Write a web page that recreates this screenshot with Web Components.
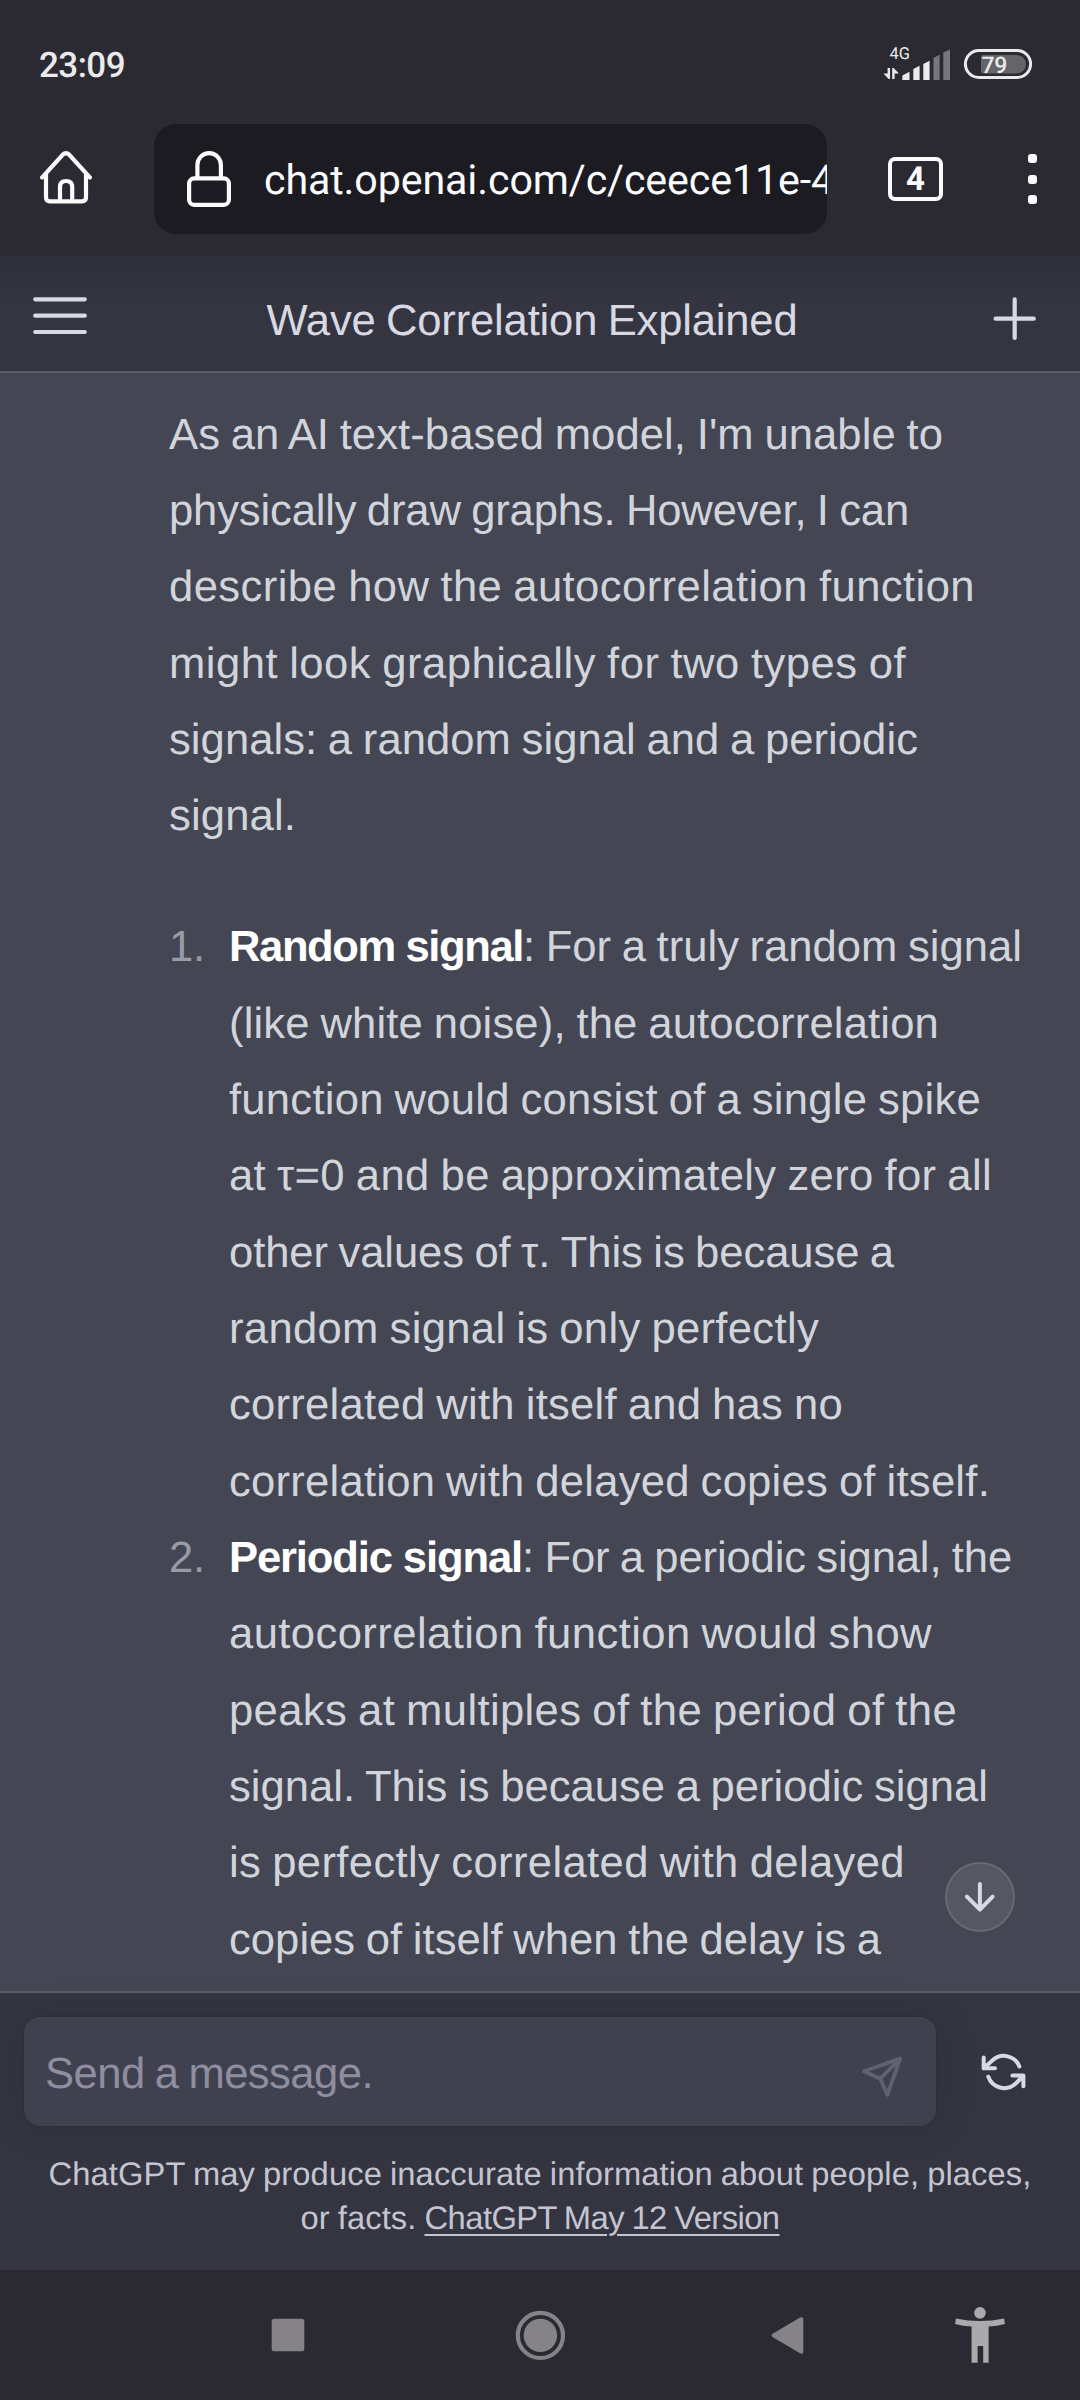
<!DOCTYPE html>
<html lang="en">
<head>
<meta charset="utf-8">
<title>Wave Correlation Explained</title>
<style>
html, body { margin: 0; padding: 0; background: #343541; }
body { width: 1080px; height: 2400px; overflow: hidden; font-family: "Liberation Sans", Arial, sans-serif; text-rendering: geometricPrecision; }
</style>
</head>
<body>
<phone-screen>
  <status-bar slot="top" time="23:09" battery="79" network="4G"></status-bar>
  <browser-bar slot="top" tabs="4">chat.openai.com/c/ceece11e-4</browser-bar>
  <chat-header slot="top">Wave Correlation Explained</chat-header>
  <chat-message>
    <text-block>
      <fit-line w="774">As an AI text-based model, I'm unable to</fit-line>
      <fit-line w="740">physically draw graphs. However, I can</fit-line>
      <fit-line w="806">describe how the autocorrelation function</fit-line>
      <fit-line w="737">might look graphically for two types of</fit-line>
      <fit-line w="749">signals: a random signal and a periodic</fit-line>
      <fit-line w="127">signal.</fit-line>
    </text-block>
    <list-item number="1.">
      <fit-line><fit-line class="b" w="294">Random signal</fit-line><fit-line w="499">: For a truly random signal</fit-line></fit-line>
      <fit-line w="710">(like white noise), the autocorrelation</fit-line>
      <fit-line w="752">function would consist of a single spike</fit-line>
      <fit-line w="763">at τ=0 and be approximately zero for all</fit-line>
      <fit-line w="665">other values of τ. This is because a</fit-line>
      <fit-line w="590">random signal is only perfectly</fit-line>
      <fit-line w="614">correlated with itself and has no</fit-line>
      <fit-line w="761">correlation with delayed copies of itself.</fit-line>
    </list-item>
    <list-item number="2.">
      <fit-line><fit-line class="b" w="293">Periodic signal</fit-line><fit-line w="490">: For a periodic signal, the</fit-line></fit-line>
      <fit-line w="703">autocorrelation function would show</fit-line>
      <fit-line w="728">peaks at multiples of the period of the</fit-line>
      <fit-line w="759">signal. This is because a periodic signal</fit-line>
      <fit-line w="676">is perfectly correlated with delayed</fit-line>
      <fit-line w="652">copies of itself when the delay is a</fit-line>
    </list-item>
  </chat-message>
  <chat-composer slot="bottom" placeholder="Send a message."></chat-composer>
  <nav-bar slot="bottom"></nav-bar>
</phone-screen>

<script>
const fitQueue = [];

function define(name, html, after) {
  const template = document.createElement('template');
  template.innerHTML = html;
  customElements.define(name, class extends HTMLElement {
    connectedCallback() {
      if (this.shadowRoot) return;
      this.attachShadow({ mode: 'open' }).append(template.content.cloneNode(true));
      this.shadowRoot.querySelectorAll('[data-attr]').forEach(el => {
        el.textContent = this.getAttribute(el.dataset.attr);
      });
      if (after) after(this);
    }
  });
}

define('phone-screen', `
<style>
:host { display: flex; flex-direction: column; width: 1080px; height: 2400px; overflow: hidden; background: #444654; }
main { flex: 1; min-height: 0; overflow: hidden; }
</style>
<slot name="top"></slot><main><slot></slot></main><slot name="bottom"></slot>`);

define('status-bar', `
<style>
:host { display: flex; box-sizing: border-box; height: 124px; padding: 0 48px 0 39px; background: #2b2a33; font-family: Roboto, sans-serif; color: #eaeaea; }
.time { flex: 1; font-size: 35px; font-weight: 500; line-height: 41px; margin-top: 45px; }
svg { display: block; margin-top: 40px; }
text { font-family: Roboto, sans-serif; fill: #eaeaea; }
</style>
<div class="time"><fit-line w="86"><span data-attr="time"></span></fit-line></div>
<svg width="152" height="50" viewBox="880 40 152 50" fill="#eaeaea">
  <text x="889.6" y="59.4" font-size="16.5" textLength="20.4" lengthAdjust="spacingAndGlyphs" data-attr="network"></text>
  <path d="M887.6 68H890V79H888.6L883.5 73.6H887.6ZM892.2 79V68H893.6L899 73.4H894.6V79Z"/>
  <path d="M902.3 80V75.6L909.5 71.8V80ZM913.3 80V69L919.6 65.8V80ZM923.3 80V64L929.6 60.8V80Z"/>
  <path fill="#77767c" d="M933.5 80V58L939.6 54.8V80ZM943.3 80V52.6L950 49.6V80Z"/>
  <rect x="965.4" y="50.5" width="65.2" height="27" rx="13.5" fill="none" stroke="#eaeaea" stroke-width="3"/>
  <path fill="#656469" d="M983 55H1016.8A9.2 9.2 0 0 1 1016.8 73.4H983A2 2 0 0 1 981 71.4V57A2 2 0 0 1 983 55Z"/>
  <text x="981.4" y="73" font-size="23" font-weight="500" textLength="26" data-attr="battery"></text>
</svg>`);

define('browser-bar', `
<style>
:host { display: flex; align-items: flex-start; box-sizing: border-box; height: 132px; padding: 0 43px 0 40px; background: #2b2a33; font-family: Roboto, sans-serif; color: #fbfbfe; }
svg { display: block; fill: none; stroke: #fbfbfe; stroke-width: 4.2; flex: none; }
.home { margin-top: 26px; }
.url { display: flex; box-sizing: border-box; width: 673px; height: 110px; margin-left: 62px; padding-left: 33px; border-radius: 22px; background: #1c1b22; overflow: hidden; }
.url svg { margin-top: 26px; }
.url div { margin: 33px 0 0 33px; font-size: 41.2px; line-height: 48px; }
.tab { box-sizing: border-box; width: 55px; height: 44px; margin: 33px 0 0 61px; border: 4px solid #fbfbfe; border-radius: 7px; font-size: 33px; font-weight: 700; line-height: 37px; text-align: center; }
.dots { display: flex; flex-direction: column; gap: 11.6px; margin: 30px 0 0 auto; }
.dots i { width: 9px; height: 9px; border-radius: 3px; background: #fbfbfe; }
</style>
<svg class="home" width="52" height="56" viewBox="40 150 52 56" stroke-linecap="round" stroke-linejoin="round">
  <path d="M42.2 177.4L62.6 154.8Q66 151.6 69.4 154.8L89.8 177.4M46 174V197.3Q46 201.3 50 201.3H82Q86 201.3 86 197.3V174M60 201V187Q60 181 66.1 181Q72.2 181 72.2 187V201"/>
</svg>
<div class="url">
  <svg width="44" height="58" viewBox="187 150 44 58">
    <rect x="189.1" y="178.4" width="39.8" height="26.4" rx="5"/>
    <path d="M197.4 178V165A11.7 11.8 0 0 1 220.9 165V178"/>
  </svg>
  <div><fit-line w="570"><slot></slot></fit-line></div>
</div>
<div class="tab" data-attr="tabs"></div>
<div class="dots"><i></i><i></i><i></i></div>`);

define('chat-header', `
<style>
:host { display: flex; box-sizing: border-box; height: 117px; padding: 0 42px 0 33px; border-bottom: 2px solid #5c5d69; background: linear-gradient(#2f2f3a, #343541 44px); color: #d9d9e3; font-size: 43.6px; line-height: 54px; }
svg { display: block; fill: none; stroke: #d9d9e3; stroke-width: 4.2; stroke-linecap: round; flex: none; }
.menu { margin-top: 40px; }
.title { margin: 38px auto 0 179.5px; }
.plus { margin-top: 39px; }
</style>
<svg class="menu" width="54" height="40" viewBox="33 296 54 40"><path d="M35.2 299.3H84.8M35.2 315.7H84.8M35.2 332H84.8"/></svg>
<div class="title"><fit-line w="531"><slot></slot></fit-line></div>
<svg class="plus" width="46" height="46" viewBox="992 295 46 46"><path d="M995.6 318.7H1033.8M1014.7 299.4V338"/></svg>`);

define('chat-message', `
<style>
:host { display: block; padding: 23.5px 0 0 169px; color: #d1d5db; font-size: 43.6px; line-height: 76.36px; }
</style><slot></slot>`);

define('text-block', `
<style>:host { display: flex; flex-direction: column; margin-bottom: 54.5px; }</style><slot></slot>`);

define('list-item', `
<style>
:host { display: flex; }
.num { width: 60px; flex: none; color: #989ca9; }
.body { display: flex; flex-direction: column; }
</style>
<div class="num"><fit-line w="36"><span data-attr="number"></span></fit-line></div><div class="body"><slot></slot></div>`);

define('chat-composer', `
<style>
:host { display: flex; flex-direction: column; box-sizing: border-box; height: 279px; position: relative; border-top: 2px solid #5c5d69; background: #343541; font-family: "Liberation Sans", Arial, sans-serif; }
.row { display: flex; padding: 24px 0 0 24px; }
.box { display: flex; justify-content: space-between; box-sizing: border-box; width: 912px; height: 109px; padding: 0 32px 0 21px; border-radius: 16px; background: #40414f; box-shadow: 0 0 40px rgba(0,0,0,.1), 0 0 3px rgba(0,0,0,.18); color: #8e8ea0; font-size: 43.6px; line-height: 54px; }
.box div { margin-top: 29.5px; }
svg { display: block; fill: none; stroke-linecap: round; stroke-linejoin: round; }
.send { margin-top: 38px; stroke: #5f6070; stroke-width: 3.8; }
.again { margin: 34px 0 0 44px; stroke: #d9d9e3; stroke-width: 4; }
.note { display: flex; flex-direction: column; align-items: center; margin-top: 26.3px; color: #c5c5d2; font-size: 32.7px; line-height: 43.6px; }
.note div { display: flex; }
.link { text-decoration: underline; text-decoration-thickness: 2px; text-underline-offset: 5px; }
.jump { position: absolute; right: 65px; top: -131px; box-sizing: border-box; width: 70px; height: 70px; border: 2px solid #686974; border-radius: 50%; background: #565762; }
.jump svg { stroke: #d9d9e3; stroke-width: 4; }
</style>
<div class="row">
  <div class="box">
    <div><fit-line w="328"><span data-attr="placeholder"></span></fit-line></div>
    <svg class="send" width="44" height="44" viewBox="860 2055 44 44"><path d="M900.2 2058.6L863.9 2071.3L880.3 2078.7L887.3 2094.8ZM880.3 2078.7L900.2 2058.6"/></svg>
  </div>
  <svg class="again" width="46" height="42" viewBox="980 2051 46 42"><path d="M1019.4 2066.4A16.8 16.8 0 0 0 992.6 2060.2L983.7 2068.3M983.7 2057.5V2068.3H995M988.3 2076.7A16.8 16.8 0 0 0 1015.4 2083.8L1023.2 2076M1012.4 2075.6H1023.4V2086.2"/></svg>
</div>
<div class="note">
  <fit-line w="983">ChatGPT may produce inaccurate information about people, places,</fit-line>
  <div><fit-line w="124">or facts.&nbsp;</fit-line><fit-line class="link" w="355">ChatGPT May 12 Version</fit-line></div>
</div>
<div class="jump"><svg width="66" height="66" viewBox="947 1864 66 66"><path d="M979.9 1884V1909.4M966.9 1896.6L979.9 1909.6L992.6 1896.6"/></svg></div>`);

define('nav-bar', `
<style>
:host { display: flex; align-items: flex-start; box-sizing: border-box; position: relative; height: 130px; padding: 37px 75px 0 271px; background: #2b2a33; justify-content: space-between; }
svg { display: block; fill: #858388; }
</style>
<svg width="34" height="60" viewBox="271 2307 34 60"><rect x="271.7" y="2318.8" width="32.6" height="32.4" rx="2.5"/></svg>
<svg width="52" height="60" viewBox="514 2307 52 60" style="margin-left:209px"><circle cx="540.4" cy="2335.4" r="22.6" fill="none" stroke="#858388" stroke-width="4.2"/><circle cx="540.4" cy="2335.4" r="16.7"/></svg>
<svg width="34" height="60" viewBox="770 2307 34 60" style="margin-left:204px"><path d="M773 2333.5L800 2317.6Q803.3 2316.2 803.3 2319.6V2351.6Q803.3 2355 800 2353.2L773 2337.3Q770 2335.4 773 2333.5Z"/></svg>
<svg width="50" height="60" viewBox="955 2307 50 60" style="margin-left:151px;fill:#aaaaac"><circle cx="980" cy="2312.9" r="5.8"/><path d="M956 2318.5Q980 2323.5 1004 2318.5L1005 2324Q997 2326 988.6 2326.6V2362.8H983.2V2346H977.6V2362.8H971.6V2326.6Q963 2326 955 2324Z"/></svg>`);

/* A single line of text whose tracking is set so that its advance equals w pixels. */
define('fit-line', `
<style>
:host { display: block; flex: none; white-space: nowrap; width: max-content; word-spacing: -0.035em; }
:host(.b) { color: #fff; font-weight: 700; word-spacing: 0; }
::slotted(fit-line) { display: inline-block; }
</style><slot></slot>`, el => {
  if (el.hasAttribute('w')) fitQueue.push(el);
});

function textOf(el) {
  const slot = el.querySelector('slot');
  if (slot) return slot.assignedNodes({ flatten: true }).map(n => n.textContent).join('').trim();
  return el.textContent;
}

for (const el of fitQueue) {
  const gap = Number(el.getAttribute('w')) - el.getBoundingClientRect().width;
  el.style.letterSpacing = (gap / textOf(el).length).toFixed(4) + 'px';
}
</script>
</body>
</html>
